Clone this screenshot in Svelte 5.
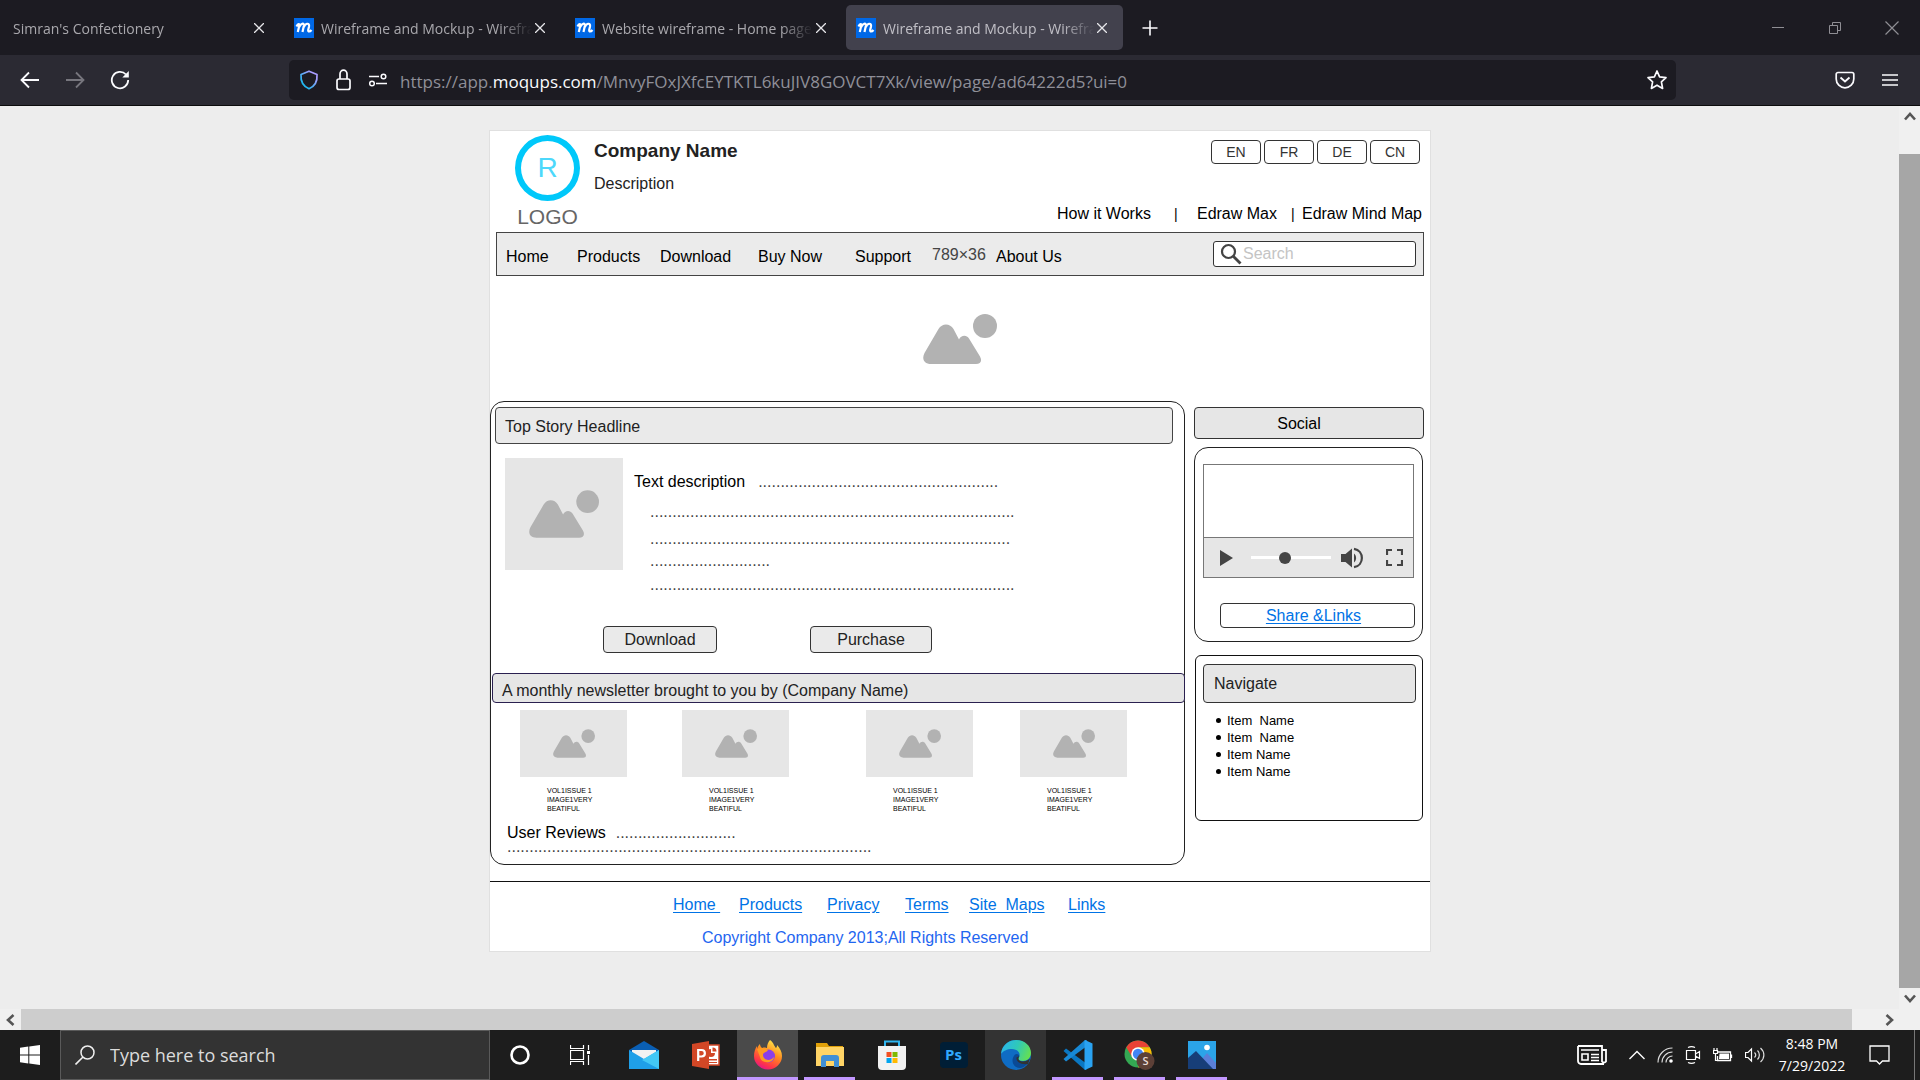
<script>
  const tabs = [
    { title: "Simran's Confectionery", icon: false, active: false },
    { title: 'Wireframe and Mockup - Wireframe', icon: true, active: false },
    { title: 'Website wireframe - Home page', icon: true, active: false },
    { title: 'Wireframe and Mockup - Wireframe', icon: true, active: true }
  ];
  const langs = ['EN', 'FR', 'DE', 'CN'];
  const dots = (n) => '.'.repeat(n);
  const storyLines = [82, 81, 27, 82];
  const issues = [1, 2, 3, 4];
  const navItems = ['Item \u00a0Name', 'Item \u00a0Name', 'Item Name', 'Item Name'];
  const footerLinks = ['Home\u00a0', 'Products', 'Privacy', 'Terms', 'Site \u00a0Maps', 'Links'];
</script>

{#snippet picture()}
  <svg class="picture" viewBox="0 0 74 50" aria-hidden="true">
    <circle cx="62" cy="12" r="12" />
    <path d="M8 50C1 50-1.500 45 1.500 39L15.500 15C19 9 27 9 30.500 15L36 25.500C38 21 43.500 20.500 46 24.500L57 42.500C59.500 47 57.500 50 53 50Z" />
  </svg>
{/snippet}

<div class="screen">
  <header class="chrome">
    <div class="tabstrip">
      <div class="tabs">
        {#each tabs as tab}
          <div class="tab" class:active={tab.active}>
            {#if tab.icon}
              <svg class="favicon" viewBox="0 0 20 20" aria-hidden="true">
                <rect width="20" height="20" fill="#0068e6" />
                <path d="M2.500 8.500C4 5.500 5.800 5.500 5.200 8L3.800 14M5.200 9C6.500 5.500 10.500 4 9.800 8L8.500 14M9.800 9C11.500 5 15.800 4.500 15 8.500L14.200 12C14 14 15.800 14 17.500 12" fill="none" stroke="#fff" stroke-width="2.200" />
              </svg>
            {/if}
            <button class="tab-title">{tab.title}</button>
            <button class="tab-close" aria-label="Close tab">
              <svg width="10" height="10" viewBox="0 0 10 10"><path d="M0 0L10 10M10 0L0 10" stroke="currentColor" stroke-width="1.300" /></svg>
            </button>
          </div>
        {/each}
      </div>
      <button class="newtab" aria-label="New tab">
        <svg width="16" height="16" viewBox="0 0 16 16"><path d="M8 0.500V15.500M0.500 8H15.500" stroke="#fbfbfe" stroke-width="1.600" /></svg>
      </button>
      <div class="window-controls">
        <button aria-label="Minimize"><svg width="14" height="14" viewBox="0 0 14 14"><path d="M1 6.500H13" stroke="#8f8e94" /></svg></button>
        <button aria-label="Restore"><svg width="14" height="14" viewBox="0 0 14 14"><path d="M1.500 4.500H9.500V12.500H1.500ZM4.500 4V1.500H12.500V9.500H10" fill="none" stroke="#8f8e94" /></svg></button>
        <button aria-label="Close"><svg width="14" height="14" viewBox="0 0 14 14"><path d="M0.500 0.500L13.500 13.500M13.500 0.500L0.500 13.500" stroke="#8f8e94" stroke-width="1.200" /></svg></button>
      </div>
    </div>
    <div class="toolbar">
      <div class="history">
        <button aria-label="Back"><svg width="20" height="20" viewBox="0 0 20 20"><path d="M19 10H2M9 2.500L1.500 10L9 17.500" fill="none" stroke="#fbfbfe" stroke-width="1.800" /></svg></button>
        <button aria-label="Forward"><svg width="20" height="20" viewBox="0 0 20 20"><path d="M1 10H18M11 2.500L18.500 10L11 17.500" fill="none" stroke="#77767e" stroke-width="1.800" /></svg></button>
        <button aria-label="Reload"><svg width="20" height="20" viewBox="0 0 20 20"><path d="M16 4.500A8.200 8.200 0 1 0 18.200 10" fill="none" stroke="#fbfbfe" stroke-width="1.800" /><path d="M18.800 1V7.500H12.300Z" fill="#fbfbfe" /></svg></button>
      </div>
      <div class="urlbar">
        <svg width="20" height="20" viewBox="0 0 20 20" aria-hidden="true">
          <defs><linearGradient id="shield" x1="1" y1="0" x2="0" y2="1"><stop offset="0.200" stop-color="#a99cff" /><stop offset="0.800" stop-color="#1fb8f0" /></linearGradient></defs>
          <path d="M10 1.200L18 4.500C18.500 11 16.500 16 10 18.800C3.500 16 1.500 11 2 4.500Z" fill="none" stroke="url(#shield)" stroke-width="1.700" stroke-linejoin="round" />
        </svg>
        <svg width="18" height="22" viewBox="0 0 18 22" aria-hidden="true"><rect x="3" y="10" width="13" height="10.500" rx="2" fill="none" stroke="#fbfbfe" stroke-width="1.700" /><path d="M6 10V5A3.500 3.800 0 0 1 13 5V10" fill="none" stroke="#fbfbfe" stroke-width="1.700" /></svg>
        <svg width="20" height="14" viewBox="0 0 20 14" aria-hidden="true"><path d="M2 3.500H12M9 10.500H20" stroke="#fbfbfe" stroke-width="1.600" /><circle cx="16.500" cy="3.500" r="2.300" fill="none" stroke="#fbfbfe" stroke-width="1.500" /><circle cx="5" cy="10.500" r="2.300" fill="none" stroke="#fbfbfe" stroke-width="1.500" /></svg>
        <div class="url" role="textbox" tabindex="0" aria-label="Address">https://app.<b>moqups.com</b>/MnvyFOxJXfcEYTKTL6kuJIV8GOVCT7Xk/view/page/ad64222d5?ui=0</div>
        <button aria-label="Bookmark this page"><svg width="22" height="22" viewBox="0 0 22 22"><path d="M11 2L13.600 7.800L20 8.600L15.400 12.800L16.600 19.400L11 16.200L5.400 19.400L6.600 12.800L2 8.600L8.400 7.800Z" fill="none" stroke="#fbfbfe" stroke-width="1.700" stroke-linejoin="round" /></svg></button>
      </div>
      <div class="actions">
        <button aria-label="Save to Pocket"><svg width="20" height="18" viewBox="0 0 20 18"><path d="M3 1.500H17A1.800 1.800 0 0 1 18.800 3.300V8A8.800 8.800 0 0 1 1.200 8V3.300A1.800 1.800 0 0 1 3 1.500Z" fill="none" stroke="#fbfbfe" stroke-width="1.700" /><path d="M5.500 6.500L10 10.500L14.500 6.500" fill="none" stroke="#fbfbfe" stroke-width="1.800" /></svg></button>
        <button aria-label="Open menu"><svg width="16" height="14" viewBox="0 0 16 14"><path d="M0 2H16M0 7H16M0 12H16" stroke="#fbfbfe" stroke-width="1.600" /></svg></button>
      </div>
    </div>
  </header>

  <div class="viewport">
    <div class="canvas">
      <main class="paper">
        <section class="masthead">
          <div class="brand">
            <div class="ring">R</div>
            <div class="brand-label">LOGO</div>
          </div>
          <div class="company">
            <h1>Company Name</h1>
            <p>Description</p>
          </div>
          <div class="masthead-right">
            <div class="langs">
              {#each langs as lang}<button>{lang}</button>{/each}
            </div>
            <div class="toplinks">
              <a href="#how">How it Works</a><span>|</span>
              <a href="#max">Edraw Max</a><span>|</span>
              <a href="#mind">Edraw Mind Map</a>
            </div>
          </div>
        </section>

        <nav class="menubar">
          <div class="menu">
            <a href="#home">Home</a>
            <a href="#products">Products</a>
            <a href="#download">Download</a>
            <a href="#buy">Buy Now</a>
            <a href="#support">Support</a>
            <span class="size">789×36</span>
            <a href="#about">About Us</a>
          </div>
          <label class="search">
            <svg width="22" height="22" viewBox="0 0 22 22" aria-hidden="true"><circle cx="8.500" cy="8.500" r="6.500" fill="none" stroke="#444" stroke-width="2.200" /><path d="M13 13L20.500 20.500" stroke="#444" stroke-width="2.800" /></svg>
            <input type="search" placeholder="Search" aria-label="Search" />
          </label>
        </nav>

        <div class="hero">{@render picture()}</div>

        <div class="columns">
          <section class="story-panel">
            <h2 class="headline">Top Story Headline</h2>
            <div class="story">
              <div class="placeholder">{@render picture()}</div>
              <div class="story-lines">
                <p class="lead">Text description <span>{dots(54)}</span></p>
                {#each storyLines as n}<p class="dots">{dots(n)}</p>{/each}
              </div>
            </div>
            <div class="story-actions">
              <button>Download</button>
              <button class="purchase">Purchase</button>
            </div>
            <h2 class="newsletter">A monthly newsletter brought to you by (Company Name)</h2>
            <div class="issues">
              {#each issues as issue (issue)}
                <figure>
                  <div class="thumb">{@render picture()}</div>
                  <figcaption>VOL1ISSUE 1<br />IMAGE1VERY<br />BEATIFUL</figcaption>
                </figure>
              {/each}
            </div>
            <div class="reviews">
              <p>User Reviews <span>{dots(27)}</span></p>
              <p><span>{dots(82)}</span></p>
            </div>
          </section>

          <aside>
            <h2 class="social-title">Social</h2>
            <section class="social">
              <div class="video">
                <div class="picture-area"></div>
                <div class="controls">
                  <button aria-label="Play"><svg width="13" height="16" viewBox="0 0 13 16"><path d="M0 0L13 8L0 16Z" fill="#444" /></svg></button>
                  <input type="range" min="0" max="100" value="41" aria-label="Seek" />
                  <button aria-label="Volume"><svg width="22" height="22" viewBox="0 0 22 22"><path d="M0 7H4.500L11 1.500V20.500L4.500 15H0Z" fill="#444" /><path d="M13 6.500C15.800 8.500 15.800 13.500 13 15.500Z" fill="#444" /><path d="M13 1.800C23.500 3.500 23.500 18.500 13 20.200" fill="none" stroke="#444" stroke-width="2.200" /></svg></button>
                  <button aria-label="Full screen"><svg width="17" height="17" viewBox="0 0 17 17"><path d="M1 6V1H6M11 1H16V6M16 11V16H11M6 16H1V11" fill="none" stroke="#444" stroke-width="2.200" /></svg></button>
                </div>
              </div>
              <div class="share"><a href="#share">Share &amp;Links</a></div>
            </section>
            <section class="navigate">
              <h2>Navigate</h2>
              <ul>
                {#each navItems as item}<li>{item}</li>{/each}
              </ul>
            </section>
          </aside>
        </div>

        <footer>
          <div class="footer-links">
            {#each footerLinks as link}<a href="#footer">{link}</a>{/each}
          </div>
          <p>Copyright Company 2013;All Rights Reserved</p>
        </footer>
      </main>
    </div>
    <div class="vbar">
      <button aria-label="Scroll up"><svg width="12" height="9" viewBox="0 0 12 9"><path d="M1 7.500L6 2L11 7.500" fill="none" stroke="#555" stroke-width="2.600" /></svg></button>
      <div class="vthumb"></div>
      <button class="down" aria-label="Scroll down"><svg width="12" height="9" viewBox="0 0 12 9"><path d="M1 1.500L6 7L11 1.500" fill="none" stroke="#555" stroke-width="2.600" /></svg></button>
    </div>
  </div>
  <div class="hbar">
    <button aria-label="Scroll left"><svg width="9" height="12" viewBox="0 0 9 12"><path d="M7.500 1L2 6L7.500 11" fill="none" stroke="#555" stroke-width="2.600" /></svg></button>
    <div class="hthumb"></div>
    <button class="right" aria-label="Scroll right"><svg width="9" height="12" viewBox="0 0 9 12"><path d="M1.500 1L7 6L1.500 11" fill="none" stroke="#555" stroke-width="2.600" /></svg></button>
  </div>

  <div class="taskbar">
    <button class="start" aria-label="Start"><svg width="20" height="20" viewBox="0 0 20 20"><path d="M0 2.800L8.300 1.600V9.500H0ZM9.300 1.400L20 0V9.500H9.300ZM0 10.500H8.300V18.400L0 17.200ZM9.300 10.500H20V20L9.300 18.600Z" fill="#fff" /></svg></button>
    <label class="tasksearch">
      <svg width="20" height="20" viewBox="0 0 20 20" aria-hidden="true"><circle cx="12.500" cy="7.500" r="6.500" fill="none" stroke="#f0f0f0" stroke-width="1.500" /><path d="M8 12L0.500 19.500" stroke="#f0f0f0" stroke-width="1.600" /></svg>
      <input type="text" placeholder="Type here to search" aria-label="Type here to search" />
    </label>
    <button class="slot sys" aria-label="Cortana"><svg width="20" height="20" viewBox="0 0 20 20"><circle cx="10" cy="10" r="8.500" fill="none" stroke="#fff" stroke-width="2.600" /></svg></button>
    <button class="slot sys" aria-label="Task View"><svg width="20" height="20" viewBox="0 0 20 20"><path d="M0.500 0V3.500H13.500V0M0.500 5.500H13.500V14.500H0.500ZM0.500 20V16.500H13.500V20M18.500 0V5M18.500 10V20" fill="none" stroke="#fff" stroke-width="1.200" /><rect x="17" y="6" width="3" height="3" fill="#fff" /></svg></button>
    <div class="apps">
      <button class="slot" aria-label="Mail"><svg width="30" height="30" viewBox="0 0 30 30"><path d="M0 10L15 1L30 10V14H0Z" fill="#0a5fb4" /><path d="M3 10H27V17L15 23L3 17Z" fill="#f2f2f2" /><path d="M0 10L15 19L30 10V29H0Z" fill="#1f9fe8" /><path d="M30 10L13 20L30 29Z" fill="#43c8f5" /></svg></button>
      <button class="slot" aria-label="PowerPoint"><svg width="28" height="28" viewBox="0 0 28 28"><rect x="15" y="4" width="12" height="20" fill="#fff" stroke="#d24726" stroke-width="1.500" /><path d="M19 8A4 4 0 1 0 23 12H19ZM20.500 6.500V10.500H24.500A4 4 0 0 0 20.500 6.500ZM17 18H25V19.500H17ZM17 21H25V22H17Z" fill="#d24726" /><path d="M0 3L17 0V28L0 25Z" fill="#d24726" /><path d="M6.200 20V9H9.500C14 9 14 15.500 9.500 15.500H6.500" fill="none" stroke="#fff" stroke-width="2.200" /></svg></button>
      <button class="slot focus" aria-label="Firefox"><svg width="30" height="30" viewBox="0 0 30 30"><defs><linearGradient id="fox" x1="0.800" y1="0" x2="0.300" y2="1"><stop offset="0" stop-color="#fff44f" /><stop offset="0.450" stop-color="#ff8a1f" /><stop offset="0.800" stop-color="#ff3647" /><stop offset="1" stop-color="#e3158b" /></linearGradient></defs><path d="M17 0C21 3 21 6 23 8C24 7 24 6 24 5C27 8 29 12 29 16A14 13.500 0 0 1 1 16C1 12 2 9 4 6V9C5 6 6 5 7 4C7 6 8 7 9 8C12 7 13 8 14 8C14 5 15 2 17 0Z" fill="url(#fox)" /><circle cx="15.500" cy="16" r="6.500" fill="#8b3fe8" /><path d="M4 9C8 7 12 8 15 10C13 13 10 12 10 15C10 20 17 22 21 17C20 24 8 24 7 17Z" fill="#ff9b22" /></svg></button>
      <button class="slot open" aria-label="File Explorer"><svg width="28" height="26" viewBox="0 0 28 26"><path d="M0 1H11L13 4H27V12H0Z" fill="#e0a008" /><path d="M0 5H28V24H0Z" fill="#ffd466" /><path d="M5 25V16A3 3 0 0 1 8 13H20A3 3 0 0 1 23 16V25H18V19H10V25Z" fill="#3f8fd6" /></svg></button>
      <button class="slot" aria-label="Microsoft Store"><svg width="30" height="30" viewBox="0 0 30 30"><path d="M8 6V1.500H22V6" fill="none" stroke="#2fb5f0" stroke-width="2" /><path d="M1 6H29V26A4 4 0 0 1 25 30H5A4 4 0 0 1 1 26Z" fill="#f2f2f2" /><path d="M9.500 12H14.500V17H9.500Z" fill="#f25022" /><path d="M15.500 12H20.500V17H15.500Z" fill="#7fba00" /><path d="M9.500 18H14.500V23H9.500Z" fill="#00a4ef" /><path d="M15.500 18H20.500V23H15.500Z" fill="#ffb900" /></svg></button>
      <button class="slot" aria-label="Photoshop"><span class="ps">Ps</span></button>
      <button class="slot hover" aria-label="Edge"><svg width="30" height="30" viewBox="0 0 30 30"><defs><linearGradient id="edge" x1="0" y1="0.300" x2="1" y2="0.600"><stop offset="0" stop-color="#2ab5ea" /><stop offset="0.500" stop-color="#2fc9b8" /><stop offset="1" stop-color="#66e04f" /></linearGradient></defs><circle cx="15" cy="15" r="15" fill="#0f6cc4" /><path d="M0 14C1 4 9 0 15 0C24 0 30 6 30 13C30 18 26 21 22 21C18 21 16 19.500 18 17C20 14 17 9 11 9C6 9 2 11 0 14Z" fill="url(#edge)" /><path d="M18 17C16 19.500 18 21.500 22 21.500C25 21.500 27 20.500 28.500 19.500C27 25 22 28 19 28C12 28 9 20 14 14.500C16 13 19 14.500 18 17Z" fill="#0a4a96" /><path d="M18.500 16C16 19 18 21.500 22 21.500C25 21.500 27.500 20 29 18.500L27 24C20 25 15 22 15.500 17.500Z" fill="#333" /></svg></button>
      <button class="slot open" aria-label="Visual Studio Code"><svg width="30" height="30" viewBox="0 0 30 30"><path d="M0.500 11L3 8.500L24 24V29L22 30Z" fill="#0a77c2" /><path d="M0.500 19L3 21.500L24 6V0.500L22 0Z" fill="#1789d6" /><path d="M22 0L29.500 3.500V26.500L22 30L21.500 29V1Z" fill="#2aa3f2" /></svg></button>
      <button class="slot open" aria-label="Chrome"><svg width="32" height="30" viewBox="0 0 32 30"><circle cx="14" cy="14" r="13.500" fill="#34a853" /><path d="M2.300 7.200A13.500 13.500 0 0 1 25.700 7.200H14L8 17Z" fill="#ea4335" /><path d="M14 7.200H25.700A13.500 13.500 0 0 1 14 27.500L20 17Z" fill="#fbbc05" /><circle cx="14" cy="14" r="6.800" fill="#fff" /><circle cx="14" cy="14" r="5.200" fill="#4285f4" /><circle cx="21.500" cy="21" r="9" fill="#5d4037" /><text x="21.500" y="25" text-anchor="middle" class="avatar">S</text></svg></button>
      <button class="slot open" aria-label="Photos"><svg width="28" height="28" viewBox="0 0 28 28"><rect width="28" height="28" fill="#2ba4e8" /><path d="M14 18L19 12L28 22V28H14Z" fill="#5b7fd8" /><path d="M0 17L8 10L25 28H0Z" fill="#173e78" /><circle cx="19" cy="6.500" r="2.800" fill="#fff" /></svg></button>
    </div>
    <div class="tray">
      <svg class="news" width="30" height="20" viewBox="0 0 30 20" aria-hidden="true"><path d="M1 1H25V16.500A2.500 2.500 0 0 0 29 16.500V5H25M27 19H4A3 3 0 0 1 1 16V1" fill="none" stroke="#fff" stroke-width="1.800" /><path d="M4 5H22M14 9.500H22M14 12.500H22M14 15.500H22M5 9H11V15H5Z" fill="none" stroke="#fff" stroke-width="1.600" /></svg>
      <svg width="16" height="10" viewBox="0 0 16 10" aria-hidden="true"><path d="M0.500 9L8 1.500L15.500 9" fill="none" stroke="#fff" stroke-width="1.400" /></svg>
      <svg width="16" height="16" viewBox="0 0 16 16" aria-hidden="true"><path d="M1 15.500A14.500 14.500 0 0 1 15.500 1M5 15.500A10.500 10.500 0 0 1 15.500 5M9 15.500A6.500 6.500 0 0 1 15.500 9" fill="none" stroke="#ddd" stroke-width="1.200" /><circle cx="14" cy="14" r="1.800" fill="#fff" /></svg>
      <svg width="16" height="18" viewBox="0 0 16 18" aria-hidden="true"><path d="M1.500 4.500H10.500V13.500H1.500ZM10.500 8L14.500 5.500V12.500L10.500 10M3 1.500C5 0.500 8 0.500 10 1.500M3 16.500C5 17.500 8 17.500 10 16.500" fill="none" stroke="#fff" stroke-width="1.200" /></svg>
      <svg width="20" height="14" viewBox="0 0 20 14" aria-hidden="true"><path d="M5 4H17.500V12.500H4.500V8M18.500 6.500V10" fill="none" stroke="#fff" stroke-width="1.300" /><path d="M6.500 5.500H16V11H6Z" fill="#fff" /><path d="M1 0V3M4 0V3M0.500 2.500H4.500V5.500H0.500ZM2.500 5V12.500H5" fill="none" stroke="#fff" stroke-width="1.200" /></svg>
      <svg width="20" height="16" viewBox="0 0 20 16" aria-hidden="true"><path d="M0.500 5.500H3L6.500 2V14L3 10.500H0.500Z" fill="none" stroke="#fff" stroke-width="1.200" /><path d="M9.500 5.500C11 7 11 9 9.500 10.500M12.500 3.500C15 6 15 10 12.500 12.500M15.500 1C20 5 20 11 15.500 15" fill="none" stroke="#ddd" stroke-width="1.200" /></svg>
      <div class="clock"><div>8:48 PM</div><div>7/29/2022</div></div>
      <svg class="note" width="21" height="21" viewBox="0 0 21 21" aria-hidden="true"><path d="M1 1H20V16H13.500L10.500 19L7.500 16H1Z" fill="none" stroke="#fff" stroke-width="1.300" /></svg>
      <div class="desktop-edge"></div>
    </div>
  </div>
</div>

<style>
  :global(body) { margin: 0; }
  .screen {
    min-height: 100vh;
    display: flex;
    flex-direction: column;
    font-family: "Liberation Sans", Arial, sans-serif;
    font-size: 16px;
    line-height: 20px;
    color: #000;
  }
  .screen * { box-sizing: border-box; }
  svg { display: block; flex: none; }
  button {
    display: flex;
    align-items: center;
    justify-content: center;
    margin: 0;
    padding: 0;
    border: 0;
    background: none;
    color: inherit;
    font: inherit;
  }
  input { font: inherit; border: 0; padding: 0; margin: 0; background: none; min-width: 0; outline: none; }
  h1, h2, p, ul, figure { margin: 0; padding: 0; font-size: 16px; font-weight: 400; }
  a { color: inherit; text-decoration: none; }

  .chrome, .taskbar { font-family: "Open Sans", "Noto Sans", sans-serif; }
  .tabstrip { display: flex; align-items: center; height: 55px; background: #1c1b22; padding-left: 3px; }
  .tabs { display: flex; gap: 4px; }
  .tab { display: flex; align-items: center; width: 277px; height: 45px; padding: 0 16px 0 10px; border-radius: 5px; color: #a9a8ad; }
  .tab.active { background: #42414d; color: #c0bfc6; }
  .favicon { width: 20px; height: 20px; margin-right: 7px; }
  .tab-title {
    flex: 1;
    min-width: 0;
    justify-content: flex-start;
    overflow: hidden;
    white-space: nowrap;
    padding-top: 2px;
    font-size: 14px;
    -webkit-mask-image: linear-gradient(to right, #000 calc(100% - 32px), transparent);
    mask-image: linear-gradient(to right, #000 calc(100% - 32px), transparent);
  }
  .tab-close { margin-left: 3px; color: #e6e6ea; }
  .newtab { margin-left: 19px; }
  .window-controls { display: flex; gap: 43px; margin-left: auto; padding-right: 21px; }
  .toolbar { display: flex; align-items: center; height: 51px; background: #2b2a33; border-bottom: 1px solid #0c0c0d; }
  .history { display: flex; gap: 25px; padding-left: 20px; width: 289px; }
  .urlbar { display: flex; align-items: center; flex: 1; height: 40px; padding: 0 8px 0 10px; border-radius: 5px; background: #1c1b22; }
  .urlbar svg { margin-right: 15px; }
  .urlbar svg:nth-of-type(3) { margin-right: 13px; }
  .urlbar button svg { margin-right: 0; }
  .url { flex: 1; padding-top: 3px; font-size: 17px; line-height: 24px; color: #8f8f98; white-space: nowrap; overflow: hidden; }
  .url b { font-weight: 400; color: #fbfbfe; }
  .actions { display: flex; justify-content: flex-end; gap: 27px; width: 244px; padding-right: 22px; }

  .viewport { display: flex; flex: 1; background: #ededed; }
  .canvas { flex: 1; padding: 25px 0 57px 21px; }
  .paper { max-width: 940px; margin: 0 auto; background: #fff; outline: 1px solid #e0e0e0; }

  .masthead { display: flex; padding: 4px 8px 3px 25px; }
  .brand { width: 65px; }
  .ring { display: flex; align-items: center; justify-content: center; height: 66px; border: 6px solid #00c8fa; border-radius: 50%; font-size: 28px; color: #4dd8fb; }
  .brand-label { margin-top: 4px; font-size: 21px; line-height: 24px; text-align: center; color: #666; }
  .company { padding: 4px 0 0 14px; color: #222; }
  .company h1 { font-size: 19px; line-height: 24px; font-weight: 700; }
  .company p { margin-top: 11px; }
  .masthead-right { margin-left: auto; padding-top: 5px; }
  .langs { display: flex; justify-content: flex-end; gap: 3px; padding-right: 2px; }
  .langs button { width: 50px; height: 24px; border: 1px solid #333; border-radius: 4px; font-size: 14px; color: #333; }
  .toplinks { display: grid; grid-template-columns: 117px 23px 94px 11px auto; margin-top: 40px; }
  .toplinks span { font-size: 14px; }

  .menubar { display: flex; align-items: center; height: 44px; margin: 0 6px; padding: 0 7px 0 9px; border: 1px solid #444; background: #ebebeb; }
  .menu { display: grid; grid-template-columns: 71px 83px 98px 97px 77px 64px auto; }
  .menu a { padding-top: 6px; }
  .menu .size { padding-top: 4px; color: #444; }
  .search { display: flex; align-items: center; gap: 1px; width: 203px; height: 26px; margin-left: auto; padding: 0 7px 0 6px; border: 1px solid #333; border-radius: 3px; background: #fff; }
  .search input { flex: 1; }
  .search input::placeholder { color: #c4c4c4; opacity: 1; }

  .picture { width: 74px; height: 50px; fill: #b2b2b2; }
  .hero { display: flex; justify-content: center; padding: 38px 1px 37px 0; }

  .columns { display: grid; grid-template-columns: 1fr 230px; gap: 9px; align-items: start; padding-right: 6px; }
  .story-panel { border: 1px solid #222; border-radius: 14px; padding-bottom: 10px; }
  .headline { display: flex; align-items: center; height: 37px; margin: 5px 11px 0 4px; padding: 2px 0 0 9px; border: 1px solid #444; border-radius: 4px; background: #eaeaea; color: #222; }
  .story { display: flex; gap: 11px; margin-top: 14px; padding-left: 14px; }
  .placeholder { display: flex; align-items: center; justify-content: center; width: 118px; height: 112px; background: #e6e6e6; }
  .placeholder .picture { width: 70px; height: 48px; }
  .story-lines { display: grid; grid-template-rows: 30px 27px 22px 24px 20px; padding-top: 14px; }
  .lead { display: flex; gap: 13px; }
  .dots { padding-left: 16px; }
  .dots, .lead span, .reviews span { color: #444; }
  .story-actions { display: flex; gap: 93px; margin-top: 31px; padding-left: 112px; }
  .story-actions button { width: 114px; height: 27px; border: 1px solid #333; border-radius: 4px; background: #eaeaea; color: #222; }
  .story-actions .purchase { width: 122px; }
  .newsletter { height: 30px; margin: 20px -1px 0 1px; padding: 7px 0 0 9px; border: 1px solid #2a2050; border-radius: 4px; background: #e6e6e6; color: #222; line-height: 20px; }
  .issues { display: grid; grid-template-columns: 162px 184px 154px 107px; margin-top: 7px; padding-left: 29px; }
  .thumb { display: flex; align-items: center; justify-content: center; width: 107px; height: 67px; background: #e6e6e6; }
  .thumb .picture { width: 42px; height: 29px; }
  figcaption { margin-top: 9px; padding-left: 27px; font-size: 7px; line-height: 9px; }
  .reviews { margin-top: 13px; padding-left: 16px; line-height: 14px; }
  .reviews p { display: flex; gap: 10px; }

  aside { padding-top: 6px; }
  .social-title { display: flex; align-items: center; justify-content: center; height: 32px; padding: 2px 20px 0 0; border: 1px solid #333; border-radius: 4px; background: #e6e6e6; }
  .social { margin: 8px 1px 0 0; padding: 16px 7px 13px 8px; border: 1px solid #222; border-radius: 14px; }
  .video { border: 1px solid #777; margin-right: 1px; }
  .picture-area { height: 73px; border-bottom: 1px solid #777; }
  .controls { display: flex; align-items: center; height: 39px; padding: 0 10px 0 16px; background: #e6e6e6; }
  .controls input { appearance: none; flex: 1; height: 12px; margin: 0 10px 0 18px; background: linear-gradient(#fff, #fff) center / 100% 3px no-repeat; }
  .controls input::-webkit-slider-thumb { appearance: none; width: 12px; height: 12px; border-radius: 50%; background: #444; }
  .controls button:last-child { margin-left: 23px; }
  .share { height: 25px; margin: 25px 0 0 17px; padding-top: 2px; border: 1px solid #333; border-radius: 4px; text-align: center; padding-right: 8px; }
  .share a, .footer-links a { color: #0073e6; text-decoration: underline; text-underline-offset: 2px; }
  .navigate { margin: 13px 1px 0; padding: 8px 6px 40px 7px; border: 1px solid #111; border-radius: 6px; }
  .navigate h2 { display: flex; align-items: center; height: 39px; padding-left: 10px; border: 1px solid #333; border-radius: 4px; background: #e6e6e6; color: #222; }
  .navigate ul { margin-top: 9px; padding-left: 13px; font-size: 13px; line-height: 17px; list-style: none; }
  .navigate li { display: flex; align-items: center; gap: 6px; }
  .navigate li::before { content: ""; width: 5px; height: 5px; border-radius: 50%; background: #000; }

  footer { margin-top: 16px; padding: 13px 0 3px; border-top: 1px solid #111; }
  .footer-links { display: grid; grid-template-columns: 66px 88px 78px 64px 99px auto; padding-left: 183px; }
  .footer-links a { justify-self: start; }
  footer p { margin-top: 13px; padding-left: 212px; color: #1f66f0; }

  .vbar { display: flex; flex-direction: column; width: 21px; background: #f0f0f0; }
  .vbar button { height: 21px; }
  .vthumb { flex: 1; margin-top: 27px; background: #a6a6a6; }
  .hbar { display: flex; align-items: center; height: 21px; background: #f0f0f0; }
  .hbar button { width: 21px; }
  .hthumb { flex: 1; height: 21px; background: #cdcdcd; }
  .hbar .right { margin: 0 20px 0 27px; }

  .taskbar { display: flex; align-items: stretch; height: 50px; background: #1d1d1d; color: #fff; }
  .start { width: 60px; }
  .tasksearch { display: flex; align-items: center; gap: 15px; width: 430px; padding-left: 14px; border: 1px solid #5a5a5a; background: #333; }
  .tasksearch input { flex: 1; font-size: 18px; line-height: 24px; }
  .tasksearch input::placeholder { color: #dcdcdc; opacity: 1; }
  .slot { width: 61px; border-bottom: 3px solid transparent; padding-top: 2px; }
  .slot.sys { width: 60px; }
  .apps { display: flex; gap: 1px; padding-left: 3px; }
  .focus { background: #4a4a4a; border-color: #c297ff; }
  .hover { background: #333; }
  .open { width: 51px; margin: 0 5px; border-color: #c297ff; }
  .ps { width: 28px; height: 26px; border-radius: 4px; background: #001e36; color: #31a8ff; font-size: 15px; line-height: 24px; font-weight: 700; }
  .avatar { font-size: 11px; fill: #e8dcd8; font-weight: 600; }
  .tray { display: flex; align-items: center; gap: 12px; margin-left: auto; }
  .news { margin-right: 10px; }
  .clock { width: 70px; font-size: 14px; line-height: 22px; text-align: center; }
  .note { margin-left: 10px; }
  .desktop-edge { align-self: stretch; width: 6px; margin-left: 12px; border-left: 1px solid #777; }
</style>
